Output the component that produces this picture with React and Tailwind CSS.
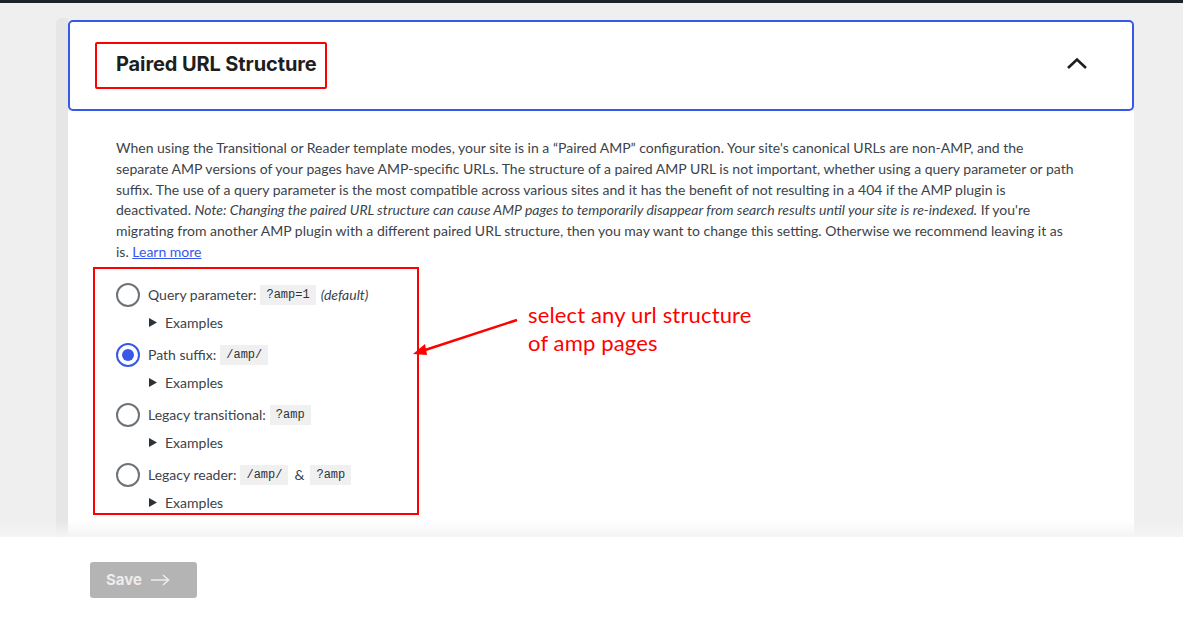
import React from "react";

const code = "font-['Liberation_Mono',monospace] text-[12px] bg-[#f0f0f0] text-[#2c3338] px-[6px] py-[3px] leading-[14px]";

function Radio({ checked }) {
  return (
    <span
      className={
        "w-[24px] h-[24px] rounded-full border-2 flex items-center justify-center shrink-0 bg-white " +
        (checked ? "border-[#3858e9]" : "border-[#6e7378]")
      }
    >
      {checked ? <span className="w-[12px] h-[12px] rounded-full bg-[#3858e9]" /> : null}
    </span>
  );
}

function Option({ checked, children }) {
  return (
    <div className="flex flex-col">
      <div className="flex items-center gap-[8px] h-[24px]">
        <Radio checked={checked} />
        <div className="flex items-center gap-[4px]">{children}</div>
      </div>
      <div className="flex items-center gap-[8px] pl-[33px] mt-[4px] h-[24px]">
        <svg width="8" height="9" viewBox="0 0 8 9">
          <path d="M0 0 L8 4.5 L0 9 Z" fill="#2c3338" />
        </svg>
        <span>Examples</span>
      </div>
    </div>
  );
}

export default function App() {
  return (
    <div className="w-[1183px] h-[617px] bg-[#efefef] overflow-hidden flex flex-col font-['Lato',sans-serif]">
      <div className="h-[3px] bg-[#1d2327] shrink-0" />
      <div className="relative h-[534px] shrink-0 overflow-hidden">
        <div className="flex pt-[15px] h-full">
          <div className="w-[56px] shrink-0" />
          <div className="w-[12px] shrink-0 bg-[#e6e6e6] rounded-tl-[6px]" />
          <div className="w-[1066px] flex flex-col mt-[2px]">
            <div className="h-[91px] shrink-0 border-2 border-[#3858e9] rounded-[5px] bg-white flex items-center justify-between pl-[25px] pr-[44px] pb-[4px]">
              <div className="border-[2.5px] border-[#ff0000] rounded-[2px] h-[47px] w-[232px] flex items-center pl-[19px] mt-[4px]">
                <span className="font-['Inter',sans-serif] font-bold text-[20px] text-[#1e1e1e] tracking-[-0.1px] -mt-[4px]">
                  Paired URL Structure
                </span>
              </div>
              <svg width="22" height="14" viewBox="0 0 22 14" fill="none" className="mb-[2px]">
                <path d="M2 12 L11 3.5 L20 12" stroke="#1e1e1e" strokeWidth="2.6" />
              </svg>
            </div>
            <div className="flex-1 bg-white pl-[48px] pt-[27px] text-[14px] text-[#3c434a]">
              <div className="leading-[20.8px] whitespace-nowrap">
                <div>When using the Transitional or Reader template modes, your site is in a “Paired AMP” configuration. Your site's canonical URLs are non-AMP, and the</div>
                <div>separate AMP versions of your pages have AMP-specific URLs. The structure of a paired AMP URL is not important, whether using a query parameter or path</div>
                <div>suffix. The use of a query parameter is the most compatible across various sites and it has the benefit of not resulting in a 404 if the AMP plugin is</div>
                <div>deactivated. <em>Note: Changing the paired URL structure can cause AMP pages to temporarily disappear from search results until your site is re-indexed.</em> If you're</div>
                <div>migrating from another AMP plugin with a different paired URL structure, then you may want to change this setting. Otherwise we recommend leaving it as</div>
                <div>
                  is. <a className="text-[#3858e9] underline">Learn more</a>
                </div>
              </div>
              <div className="mt-[4px] -ml-[23px] w-[326px] h-[248px] border-[2.5px] border-[#ff0000] pl-[21px] pt-[14px] flex flex-col gap-[8px]">
                <Option>
                  <span>Query parameter:</span>
                  <code className={code}>?amp=1</code>
                  <em className="ml-[1px]">(default)</em>
                </Option>
                <Option checked>
                  <span>Path suffix:</span>
                  <code className={code}>/amp/</code>
                </Option>
                <Option>
                  <span>Legacy transitional:</span>
                  <code className={code}>?amp</code>
                </Option>
                <Option>
                  <span>Legacy reader:</span>
                  <code className={code}>/amp/</code>
                  <span className="mx-[2px]">&amp;</span>
                  <code className={code}>?amp</code>
                </Option>
              </div>
            </div>
          </div>
        </div>
        {/* annotation */}
        <svg className="absolute left-[405px] top-[305px]" width="120" height="55" viewBox="0 0 120 55">
          <line x1="112" y1="12" x2="14" y2="44" stroke="#ff0000" strokeWidth="2.5" />
          <path d="M8 46 L20 36 L22 47 Z" fill="#ff0000" />
        </svg>
        <div className="absolute left-[528px] top-[298px] text-[#ff0000] text-[22px] leading-[28px] tracking-[0.15px] font-['Lato',sans-serif]">
          <div>select any url structure</div>
          <div>of amp pages</div>
        </div>
        <div className="absolute left-0 right-0 bottom-0 h-[17px] bg-gradient-to-b from-transparent to-[#f4f4f4]" />
      </div>
      <div className="flex-1 bg-white pl-[90px] pt-[25px]">
        <button className="w-[107px] h-[36px] rounded-[3px] bg-[#b4b4b4] flex items-center gap-[9px] pl-[16px] text-[#ececec] font-['Inter',sans-serif] font-bold text-[15px]">
          <span>Save</span>
          <svg width="19" height="12" viewBox="0 0 19 12" fill="none">
            <path d="M0 6 H17 M12 1 L17.5 6 L12 11" stroke="#ececec" strokeWidth="1.6" />
          </svg>
        </button>
      </div>
    </div>
  );
}
